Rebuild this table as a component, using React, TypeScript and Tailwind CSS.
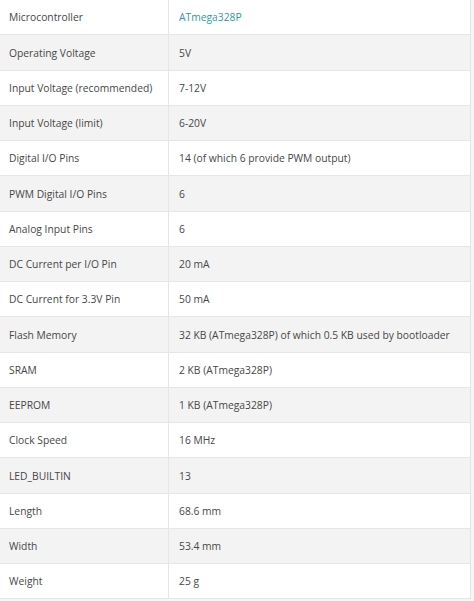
const specs: [string, string][] = [
  ["Microcontroller", "ATmega328P"],
  ["Operating Voltage", "5V"],
  ["Input Voltage (recommended)", "7-12V"],
  ["Input Voltage (limit)", "6-20V"],
  ["Digital I/O Pins", "14 (of which 6 provide PWM output)"],
  ["PWM Digital I/O Pins", "6"],
  ["Analog Input Pins", "6"],
  ["DC Current per I/O Pin", "20 mA"],
  ["DC Current for 3.3V Pin", "50 mA"],
  ["Flash Memory", "32 KB (ATmega328P) of which 0.5 KB used by bootloader"],
  ["SRAM", "2 KB (ATmega328P)"],
  ["EEPROM", "1 KB (ATmega328P)"],
  ["Clock Speed", "16 MHz"],
  ["LED_BUILTIN", "13"],
  ["Length", "68.6 mm"],
  ["Width", "53.4 mm"],
  ["Weight", "25 g"],
]

export default function App() {
  return (
    <div className="w-[474px] h-[601px] bg-[#f6f6f6] overflow-hidden text-[10.3px] text-[#474747] font-['Open_Sans',sans-serif]">
      <div className="w-[471px] bg-white border-r border-[#e4e4e4]">
        {specs.map(([name, value], i) => (
          <div
            key={name}
            className={`flex h-[35.25px] border-b border-[#e6e6e6] pt-[2px] ${i % 2 === 1 ? "bg-[#f3f3f3]" : "bg-white"}`}
          >
            <div className="w-[169px] shrink-0 flex items-center pl-[9px] border-r border-[#e6e6e6] -mt-[2px]">
              <span className="mt-[2px]">{name}</span>
            </div>
            <div className={`flex items-center pl-[10px] ${i === 0 ? "text-[#2f9a9c]" : ""}`}>{value}</div>
          </div>
        ))}
      </div>
    </div>
  )
}
